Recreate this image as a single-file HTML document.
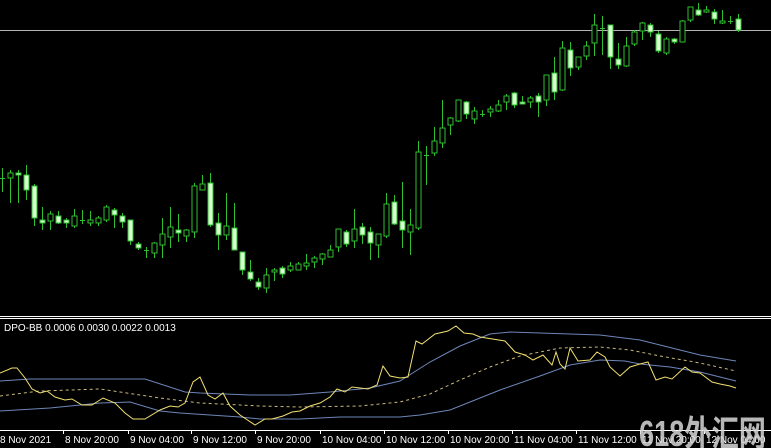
<!DOCTYPE html>
<html><head><meta charset="utf-8"><style>
html,body{margin:0;padding:0;background:#000;width:771px;height:448px;overflow:hidden}
svg{display:block}
text{font-family:"Liberation Sans",sans-serif;font-size:10px;fill:#fff}
.wm{font-family:"Liberation Sans","Noto Sans CJK SC",sans-serif;font-size:36px;font-weight:bold;fill:#d8d8d8;opacity:.85}
</style></head><body>
<svg id="s" width="771" height="448" xmlns="http://www.w3.org/2000/svg">
<line x1="0" y1="30.5" x2="771" y2="30.5" stroke="#b4b4b4"/>
<g id="c"></g>
<line x1="0" y1="316.5" x2="771" y2="316.5" stroke="#fff"/>
<line x1="0" y1="318.5" x2="771" y2="318.5" stroke="#fff"/>
<text x="4" y="331">DPO-BB 0.0006 0.0030 0.0022 0.0013</text>
<polyline fill="none" stroke="#6d86b8" points="0,381 30,379 145,379 185,392 200,393 250,395 290,395 330,392 370,388 400,381 430,362 460,346 490,334 510,332 540,333 600,335 640,340 680,350 700,355 736,361"/>
<polyline fill="none" stroke="#6d86b8" points="0,411 50,408 100,403 130,402 160,411 180,413 240,417 260,419 300,419 340,417 400,417 420,415 450,410 470,402 500,390 540,376 570,365 600,360 625,361 640,364 670,367 700,372 736,381"/>
<polyline fill="none" stroke="#c8b878" stroke-dasharray="3,3" points="0,396 40,391 100,389 160,398 200,403 260,406 300,407 360,406 400,402 430,394 460,380 490,367 520,356 560,348 600,347 630,350 660,356 700,363 736,371"/>
<polyline fill="none" stroke="#f0e070" points="0,373 12,368 17,368 25,378 32,389 40,393 47,391 55,397 65,400 72,399 82,405 92,405 103,398 115,403 125,413 133,419 145,419 160,410 170,406 178,407 185,403 193,382 200,377 208,395 215,399 223,393 230,406 240,415 255,425 265,419 272,419 283,416 292,412 300,411 310,406 320,403 330,397 337,389 345,392 352,387 368,389 377,385 383,366 390,376 400,378 408,377 416,341 422,344 435,334 448,331 456,326 464,333 473,334 480,337 505,341 515,352 525,355 533,360 543,355 552,365 556,352 560,364 565,369 570,348 578,361 590,360 597,352 605,357 610,367 620,376 630,367 640,364 648,362 656,380 665,377 672,379 685,367 692,372 700,373 712,382 720,384 730,386 736,388"/>
<line x1="0" y1="430.5" x2="771" y2="430.5" stroke="#fff"/>
<g id="t"></g>
<text class="wm" x="639" y="446" textLength="127" lengthAdjust="spacingAndGlyphs">618外汇网</text>
</svg>
<script>
var C=[[0,168,192,178,178],[8,170,203,178,173],[16,170,203,173,175],[24,165,200,175,190],[32,184,226,186,218],[40,207,230,220,223],[48,211,230,221,214],[56,211,224,216,223],[64,218,228,220,223],[72,209,228,226,216],[80,210,224,220,220],[88,211,226,223,220],[96,216,226,223,218],[104,205,222,220,207],[112,208,228,210,215],[120,213,228,216,222],[128,220,245,220,241],[136,242,250,244,248],[144,247,258,250,250],[152,242,258,253,243],[160,218,258,245,234],[168,207,248,237,227],[176,214,242,230,233],[184,229,242,236,230],[192,183,238,232,186],[200,175,190,190,184],[208,173,227,183,225],[216,213,250,223,235],[224,193,240,235,226],[232,203,248,228,250],[240,252,275,252,270],[248,260,281,272,279],[256,278,290,282,287],[264,268,293,288,275],[272,268,281,272,270],[280,266,278,268,274],[288,262,272,270,266],[296,262,270,270,264],[304,254,270,266,263],[312,256,268,262,258],[320,253,265,259,254],[328,245,257,257,250],[336,229,252,247,229],[344,230,247,232,244],[352,209,248,241,229],[360,223,244,227,235],[368,227,260,232,243],[376,234,258,245,234],[384,193,238,236,204],[392,195,225,202,224],[400,182,248,221,230],[408,209,255,232,225],[416,141,230,228,152],[424,146,185,155,155],[432,127,156,153,141],[440,100,148,143,128],[448,117,135,125,118],[456,100,122,121,100],[464,101,119,102,114],[472,107,124,119,111],[480,110,117,114,114],[488,106,117,112,109],[496,100,112,111,105],[504,94,110,102,96],[512,92,108,93,105],[520,96,104,102,104],[528,96,108,102,98],[536,93,117,96,102],[544,75,106,100,75],[552,57,100,73,92],[560,41,91,90,48],[568,42,76,50,68],[576,57,70,67,57],[584,41,60,56,46],[592,14,56,43,25],[600,16,55,28,28],[608,25,69,25,57],[616,43,69,59,65],[624,37,67,66,46],[632,30,46,44,32],[640,22,40,31,23],[648,23,37,25,32],[656,31,53,34,51],[664,37,55,53,39],[672,38,44,39,42],[680,20,42,42,21],[688,7,22,20,7],[696,3,16,10,15],[704,6,13,12,10],[712,9,24,12,19],[720,10,24,23,21],[728,16,24,21,21],[736,14,32,19,30]];
var h='';
C.forEach(function(c){var x=c[0]+2.5,o=c[3],cl=c[4];var t=Math.min(o,cl),b=Math.max(o,cl);
h+='<line x1="'+x+'" y1="'+c[1]+'" x2="'+x+'" y2="'+c[2]+'" stroke="#2fc02f"/>';
if(b-t<1){h+='<line x1="'+(x-2.5)+'" y1="'+(t+.5)+'" x2="'+(x+2.5)+'" y2="'+(t+.5)+'" stroke="#2fc02f"/>';}
else h+='<rect x="'+(x-2.5)+'" y="'+t+'" width="5" height="'+(b-t)+'" fill="'+(cl>o?'#d8ffd0':'#000')+'" stroke="#2fc02f"/>';});
document.getElementById('c').innerHTML=h;
var L=[[-2,'8 Nov 2021'],[63,'8 Nov 20:00'],[128,'9 Nov 04:00'],[191,'9 Nov 12:00'],[255,'9 Nov 20:00'],[320,'10 Nov 04:00'],[384,'10 Nov 12:00'],[448,'10 Nov 20:00'],[512,'11 Nov 04:00'],[576,'11 Nov 12:00'],[640,'11 Nov 20:00'],[704,'12 Nov 04:00']];
var g='';L.forEach(function(l){g+='<line x1="'+(l[0]+0.5)+'" y1="430" x2="'+(l[0]+0.5)+'" y2="434" stroke="#fff"/><text x="'+(l[0]+2)+'" y="443">'+l[1]+'</text>';});
document.getElementById('t').innerHTML=g;
</script>
</body></html>
